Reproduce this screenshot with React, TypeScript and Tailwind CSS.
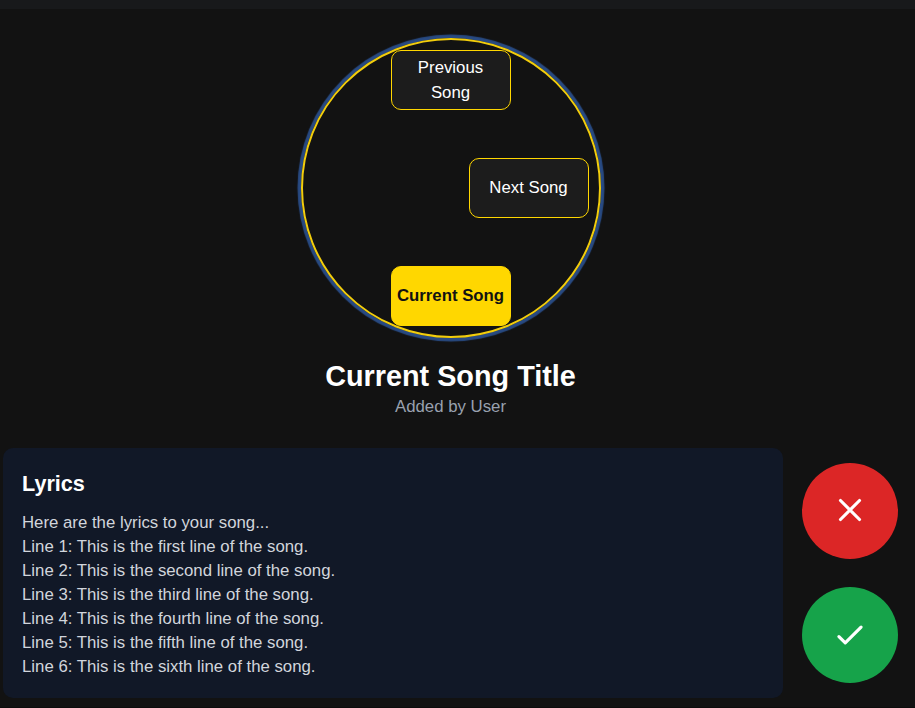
const lines = [
  'Here are the lyrics to your song...',
  'Line 1: This is the first line of the song.',
  'Line 2: This is the second line of the song.',
  'Line 3: This is the third line of the song.',
  'Line 4: This is the fourth line of the song.',
  'Line 5: This is the fifth line of the song.',
  'Line 6: This is the sixth line of the song.',
];

const chip =
  'flex h-[60px] w-[120px] shrink-0 items-center justify-center rounded-[10px] border border-[#ffd700] text-center text-[16.8px] leading-[25px]';

function Icon({ d }: { d: string }) {
  return (
    <svg className="size-[38px]" viewBox="0 0 24 24" fill="none" stroke="white" strokeWidth={2} strokeLinecap="round" strokeLinejoin="round">
      <path d={d} />
    </svg>
  );
}

export default function App() {
  return (
    <div className="flex h-[708px] w-full flex-col overflow-hidden border-b border-[#0c0c0c] bg-[#121212] font-['Liberation_Sans',Arial,sans-serif] text-white">
      <header className="h-[9px] shrink-0 bg-[#18191b]" />
      <main className="flex w-[902px] flex-col items-center pt-[29px]">
        <div className="flex size-[300px] flex-col items-center justify-center gap-12 rounded-full border-2 border-[#f2cd0c] shadow-[0_0_1px_3.5px_#284a82]">
          <div className={`${chip} bg-[#1c1c1c] pr-[17px] pl-4`}>Previous Song</div>
          <div className={`${chip} ml-[156px] bg-[#1c1c1c] pr-px pb-px`}>Next Song</div>
          <div className={`${chip} bg-[#ffd700] pr-px pb-px font-bold whitespace-nowrap text-[#121212]`}>Current Song</div>
        </div>
        <h1 className="mt-5 pr-px text-[28.8px] leading-9 font-bold">Current Song Title</h1>
        <p className="mt-px pr-px text-[16.8px] leading-6 text-gray-400">Added by User</p>
      </main>
      <div className="mt-[29px] flex pl-[3px]">
        <section className="h-[250px] w-[780px] rounded-[10px] bg-[#111827] px-[19px] pt-5">
          <h2 className="text-[21.6px] leading-8 font-bold">Lyrics</h2>
          <div className="mt-[11px] text-[16.8px] leading-6 text-gray-300">
            {lines.map((line) => (
              <p key={line}>{line}</p>
            ))}
          </div>
        </section>
        <div className="ml-[19px] flex flex-col gap-7 pt-[15px]">
          <button className="flex size-24 items-center justify-center rounded-full bg-[#dc2626] pb-0.5" aria-label="Reject">
            <Icon d="M6 18L18 6M6 6l12 12" />
          </button>
          <button className="flex size-24 items-center justify-center rounded-full bg-[#16a34a]" aria-label="Accept">
            <Icon d="M5 13l4 4L19 7" />
          </button>
        </div>
      </div>
    </div>
  );
}
